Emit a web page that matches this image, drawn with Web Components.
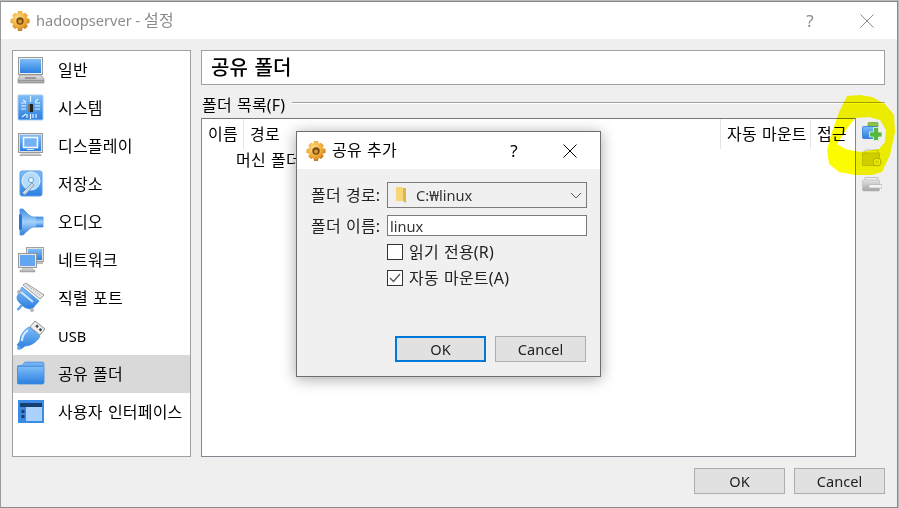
<!DOCTYPE html>
<html lang="ko"><head><meta charset="utf-8">
<style>
html,body{margin:0;height:100%;background:#b9b9b9;overflow:hidden}
body{font:16px/20px "Noto Sans","Noto Sans CJK KR",sans-serif;color:#000;letter-spacing:.2px;word-spacing:.8px}
</style></head><body>
<vb-settings></vb-settings>
<script>
const blue=`<defs>
<linearGradient id="b" x1="0" y1="0" x2="0" y2="1"><stop offset="0" stop-color="#7fbdf8"/><stop offset="1" stop-color="#2a7fe0"/></linearGradient>
<linearGradient id="g" x1="0" y1="0" x2="0" y2="1"><stop offset="0" stop-color="#e4e4e4"/><stop offset="1" stop-color="#a2a2a2"/></linearGradient>
<linearGradient id="h" x1="0" y1="0" x2="0" y2="1"><stop offset="0" stop-color="#3f8ee2"/><stop offset=".5" stop-color="#a4d2fb"/><stop offset="1" stop-color="#2f7fdc"/></linearGradient>
</defs>`;
const ICONS={
general:`<rect x="3.5" y="3.5" width="24" height="17" fill="#eee" stroke="#9a9a9a"/><rect x="5" y="5" width="21" height="14" fill="url(#b)"/><path d="M5 21H26L29 25V29H3V25Z" fill="url(#g)" stroke="#8d8d8d" stroke-width=".7"/><rect x="10" y="23" width="11" height="2" fill="#777" opacity=".6"/><rect x="3" y="26" width="26" height="1" fill="#777" opacity=".5"/>`,
system:`<rect x="3" y="3" width="25" height="25" rx="1" fill="url(#b)" stroke="#a9cbef"/><rect x="13" y="12" width="5" height="8" fill="#222"/><rect x="13" y="12" width="2" height="8" fill="#777"/><path d="M15.5 4v6M15.5 22v5M6 11h5M6 14h5M6 17h5M20 11h5M20 14h5M20 17h5M8 8l3 2M23 7l-3 3M7 25l4-3M12 22v4M18 22v4M21 22v4" stroke="#e8f4ff" stroke-width="1.2" fill="none"/>`,
display:`<rect x="3.5" y="3.5" width="24" height="19" fill="#dedede" stroke="#9a9a9a"/><rect x="5" y="5" width="21" height="16" fill="url(#b)"/><rect x="8.500" y="7.500" width="14" height="10" fill="#74b2f4" stroke="#f2f8ff" stroke-width="1.600"/><rect x="12" y="19" width="7" height="1" fill="#d8ebff"/><path d="M6 23H25L27 26H4Z" fill="url(#g)"/>`,
storage:`<rect x="5" y="3" width="22" height="25" rx="2" fill="url(#b)" stroke="#5c9fe8"/><circle cx="16" cy="13" r="9" fill="#b7dcfb" stroke="#e6f4ff"/><circle cx="16" cy="12" r="2.500" fill="#f1f8ff" stroke="#5f9fe0"/><path d="M7 25L17 15l2 2L10 27Z" fill="#d3d9e0" stroke="#5b8fc8" stroke-width=".8"/>`,
audio:`<path d="M5 3h3c4 4 7 8 11 8h9v10h-9c-4 0-7 5-11 8H5Z" fill="url(#h)" stroke="#4f93e0" stroke-width=".8"/><rect x="4" y="8" width="3" height="16" rx="1.500" fill="#2878d8"/><rect x="21" y="11" width="7" height="10" fill="url(#h)"/>`,
network:`<rect x="11.500" y="3.500" width="17" height="14" fill="#e0e0e0" stroke="#a0a0a0"/><rect x="13" y="5" width="14" height="11" fill="url(#b)"/><rect x="3.500" y="9.500" width="18" height="14" fill="#e6e6e6" stroke="#999"/><rect x="5" y="11" width="15" height="11" fill="#62a6f1"/><path d="M8 24h9l1 2h2v2H5v-2h2Z" fill="url(#g)" stroke="#999" stroke-width=".5"/><path d="M22 18h6v2h-6Z" fill="#bbb"/>`,
serial:`<path d="M11 1L29 13 25 17 8 3Z" fill="#e8e8e8" stroke="#9a9a9a"/><path d="M12 3L26 14" stroke="#999" stroke-width=".8" stroke-dasharray="1.500 1"/><path d="M7 5L24 19 17 27C12 27 9 25 8 24 5 21 2 19 2 15Z" fill="url(#b)" stroke="#3f88da" stroke-width=".8"/><path d="M7 23L2.500 28" stroke="#5aa0ea" stroke-width="2.400"/><circle cx="4" cy="10" r="2" fill="#b5b5b5"/><circle cx="17" cy="28" r="2" fill="#b5b5b5"/><path d="M6 10L18 20" stroke="#cfe6fd" stroke-width="2"/>`,
usb:`<path d="M20 1l10 8-5 6-10-8Z" fill="#ededed" stroke="#8f8f8f"/><rect x="21" y="5" width="2.500" height="2.500" fill="#444" transform="rotate(38 22 6)"/><rect x="24.500" y="8" width="2.500" height="2.500" fill="#444" transform="rotate(38 25 9)"/><path d="M14 7L25 16C22 22 16 26 10 26L6 29 2 25 5 21C5 15 9 10 14 7Z" fill="url(#b)" stroke="#4c90df" stroke-width=".8"/><path d="M13 10C9 13 7 17 7 21" stroke="#d7ecff" stroke-width="2" fill="none"/><circle cx="4" cy="28" r="2" fill="#5ca2ec"/>`,
folder:`<path d="M3 26V7.500h4L10 4H27q2 0 2 2V8H3Z" fill="#6fb1f2" stroke="#4b8fdc" stroke-width=".7"/><path d="M2.500 8.500H29V24.500Q29 26 27.500 26H4Q2.500 26 2.500 24.500Z" fill="url(#b)" stroke="#3f8bdc" stroke-width=".8"/>`,
ui:`<rect x="3" y="4" width="26" height="23" fill="#3b8be6"/><rect x="5" y="7" width="22" height="18" fill="#a9d1fb"/><rect x="5" y="7" width="22" height="4" fill="#14406f"/><rect x="5" y="11" width="6" height="14" fill="#3c86dc"/><rect x="6.500" y="14" width="3" height="3" fill="#123f75"/><rect x="6.500" y="19" width="3" height="3" fill="#123f75"/>`,
add:`<path d="M6 4V1.500Q6 .5 7 .5H15Q16 .5 16 1.500V5Z" fill="#8cc63f" stroke="#5f9e2b" stroke-width=".6"/><rect x=".5" y="4.500" width="15" height="12" rx="1" fill="url(#b)" stroke="#2d7ad0" stroke-width=".8"/><path d="M11.500 5.500h5v4.500h3.500v5h-3.500v3.500h-5V15H7.500V10h4Z" fill="#56b83f" stroke="#e7f7da" stroke-width=".8"/>`,
edit:`<path d="M3 4V1h13v3" fill="#f0f0f0" stroke="#c4c4c4"/><rect x=".5" y="4" width="17" height="12.500" fill="#d2d2d2" stroke="#b4b4b4" stroke-width=".7"/><circle cx="15" cy="13" r="4" fill="#efefef" stroke="#b0b0b0"/><circle cx="15" cy="13" r="1.800" fill="#d4d4d4"/>`,
remove:`<path d="M3 4V1.500h13V4" fill="#eee" stroke="#c2c2c2"/><rect x=".5" y="4" width="17" height="11" rx="1" fill="url(#g)" stroke="#bbb" stroke-width=".7"/><rect x="7" y="8.500" width="13" height="3.500" fill="#f4f4f4" stroke="#b5b5b5" stroke-width=".7"/>`
};
function def(name,css,html,extra={}){
  const t=document.createElement('template');
  t.innerHTML=`<style>${css}</style>${html}`;
  customElements.define(name,class extends HTMLElement{
    constructor(){super();this.attachShadow({mode:'open'}).appendChild(t.content.cloneNode(true));}
    connectedCallback(){extra.init&&extra.init.call(this)}
  });
}
def('vb-latin',`:host{display:inline;font-size:14.6px;white-space:pre;letter-spacing:0;word-spacing:0}`,`<slot></slot>`);
def('vb-icon',`:host{display:block;width:var(--s,32px);height:var(--s,32px);flex:none}svg{display:block;width:100%;height:100%}`,`<svg></svg>`,{
  init(){const n=this.getAttribute('name');const vb=this.getAttribute('vb')||'0 0 32 32';const s=this.shadowRoot.querySelector('svg');s.setAttribute('viewBox',vb);s.innerHTML=blue+ICONS[n];}
});
def('vb-gear',`:host{display:block;width:20px;height:20px;flex:none}svg{display:block}`,`<svg width="20" height="20" viewBox="0 0 20 20"><defs><radialGradient id="a" cx=".4" cy=".35" r=".75"><stop offset="0" stop-color="#ffe089"/><stop offset=".6" stop-color="#eda52f"/><stop offset="1" stop-color="#a9671a"/></radialGradient></defs><path d="M8 0h4l.7 2.800 2.300-1 2.800 2.800-1.300 2.300L19.500 8v4l-3 .7 1.300 2.500-2.800 2.800-2.300-1.300L12 20H8l-.7-3.300-2.300 1.300L2.200 15.200l1.300-2.500L.5 12V8l3-.9L2.200 4.600 5 1.800l2.300 1Z" fill="url(#a)"/><circle cx="10" cy="10" r="3.700" fill="#7a4a12"/><circle cx="10" cy="10.500" r="2" fill="#d89a36"/></svg>`);
def('vb-close',`:host{display:block;width:14px;height:14px;color:inherit}svg{display:block}`,`<svg width="14" height="14" viewBox="0 0 14 14"><path d="M.5.5l13 13M13.500.5l-13 13" stroke="currentColor" stroke-width="1" fill="none"/></svg>`);
def('vb-titlebar',`:host{display:flex;align-items:center;height:var(--h,37px);background:#fff;flex:none;padding-left:9px;gap:6px;color:var(--c,#000)}
.t{flex:1;white-space:nowrap;margin-top:-2px}.q{font-size:17px;width:20px;text-align:center;margin-right:var(--qm,34px)}vb-close{margin-right:var(--xm,23px)}`,
`<vb-gear></vb-gear><span class="t"><slot></slot></span><span class="q">?</span><vb-close></vb-close>`);
def('vb-button',`:host{display:flex;align-items:center;justify-content:center;box-sizing:border-box;width:91px;height:26px;background:#e1e1e1;border:1px solid #adadad;font-size:14.6px;letter-spacing:0;color:#222;flex:none}
:host([default]){border:2px solid #0078d7}`,`<slot></slot>`);
def('vb-nav-item',`:host{display:flex;align-items:center;height:38px;padding-left:2px;gap:11px;white-space:nowrap;color:#000}:host([selected]){background:#d9d9d9}`,`<slot name="icon"></slot><span><slot></slot></span>`);
def('vb-sidebar',`:host{display:block;box-sizing:border-box;background:#fff;border:1px solid #a0a0a0;width:179px;flex:none}`,`<slot></slot>`);
def('vb-header-cell',`:host{display:flex;align-items:center;box-sizing:border-box;padding-left:6px;border-right:1px solid #e5e5e5;height:30px;white-space:nowrap}`,`<slot></slot>`);
def('vb-table',`:host{display:block;box-sizing:border-box;flex:1;background:#fff;border:1px solid #828790;border-top-color:#777}
.h{display:grid;grid-template-columns:42px 477px 90px 44px;height:31px}.r{box-sizing:border-box;padding:0 0 0 34px;height:20px;white-space:nowrap}`,
`<div class="h"><vb-header-cell>이름</vb-header-cell><vb-header-cell>경로</vb-header-cell><vb-header-cell>자동 마운트</vb-header-cell><vb-header-cell style="border:0">접근</vb-header-cell></div><div class="r">머신 폴더</div>`);
def('vb-group-label',`:host{display:flex;height:33px;gap:7px;white-space:nowrap;padding-left:1px}
i{flex:1;height:1px;background:#a0a0a0;box-shadow:0 1px #fff;margin-top:17px}span{height:20px;margin-top:10px}`,`<span><slot></slot></span><i></i>`);
def('vb-highlight',`:host{position:absolute;left:824px;top:93px;width:74px;height:84px;pointer-events:none;mix-blend-mode:multiply}svg{display:block}`,
`<svg width="74" height="84" viewBox="825 95 74 84"><path fill-rule="evenodd" fill="#fcfc00" d="M847 96L860 95 872 97 885 104 894 115 895 132 890 155 882 172 872 175 855 175 839 172 829 164 827 150 832 132 839 112ZM855 118L869 117 880 120 886 130 885 142 879 149 860 152 855 151 845 149 837 144 846 130Z"/></svg>`);
def('vb-checkbox',`:host{display:flex;align-items:center;gap:6px;height:16px;white-space:nowrap;color:#222}
.b{box-sizing:border-box;width:16px;height:16px;background:#fff;border:1px solid #333;flex:none}svg{display:block}`,
`<span class="b"><svg width="14" height="14" viewBox="0 0 14 14"><path class="m" d="M2 7l3.500 3.500L12 3" stroke="#555" stroke-width="1.300" fill="none"/></svg></span><slot></slot>`,{init(){if(!this.hasAttribute('checked'))this.shadowRoot.querySelector('.m').remove();}});
def('vb-combo',`:host{display:flex;align-items:center;box-sizing:border-box;height:26px;background:#f0f0f0;border:1px solid #7a7a7a;padding-left:7px;gap:8px;color:#333;font-size:14.6px;letter-spacing:0}
.t{flex:1}svg{display:block;flex:none}`,
`<svg width="13" height="18" viewBox="0 0 13 18"><path d="M1 1h6l1 1h3v15l-3-2H1Z" fill="#f5d779"/><path d="M8 2h3v15l-3-2Z" fill="#dcb74f"/></svg><span class="t"><slot></slot></span><svg width="12" height="7" viewBox="0 0 12 7" style="margin-right:4px"><path d="M1 1l5 5 5-5" stroke="#555" fill="none"/></svg>`);
def('vb-input',`:host{display:flex;align-items:center;box-sizing:border-box;height:21px;background:#fff;border:1px solid #7a7a7a;padding-left:2px;color:#333;font-size:14.6px;letter-spacing:0}`,`<slot></slot>`);
def('vb-dialog',`:host{position:absolute;left:295px;top:129px;width:305px;height:246px;box-sizing:border-box;border:1px solid #6f6f6f;background:#f0f0f0;display:flex;flex-direction:column;box-shadow:0 2px 14px rgba(0,0,0,.35);z-index:5;--qm:33px;color:#222}
.f{display:grid;grid-template-columns:76px 200px;padding:13px 0 0 14px;align-items:center;row-gap:7px}
.l{white-space:nowrap}.c{grid-column:2;margin-top:1px}.c+.c{margin-top:3px}
.b{display:flex;justify-content:flex-end;gap:9px;padding:0 14px 0 0;margin-top:auto;margin-bottom:14px}`,
`<vb-titlebar><slot name="title"></slot></vb-titlebar><div class="f"><span class="l">폴더 경로:</span><vb-combo>C:₩linux</vb-combo><span class="l">폴더 이름:</span><vb-input>linux</vb-input><vb-checkbox class="c">읽기 전용(R)</vb-checkbox><vb-checkbox class="c" checked>자동 마운트(A)</vb-checkbox></div><div class="b"><vb-button default>OK</vb-button><vb-button>Cancel</vb-button></div>`);
def('vb-settings',`:host{display:flex;flex-direction:column;position:relative;box-sizing:border-box;width:898px;height:507px;margin-top:1px;border:1px solid #8a8a8a;border-left-color:#9a9a9a;background:#efefef;--c:#000}
vb-titlebar{--c:#8c8c8c}
.m{display:flex;gap:10px;padding:11px 12px 0 11px;height:407px;box-sizing:content-box}
.r{flex:1;display:flex;flex-direction:column;min-width:0}
.head{box-sizing:border-box;height:35px;background:#fff;border:1px solid #a0a0a0;padding-left:9px;font-size:20px;line-height:34px;font-weight:500;flex:none}
.mid{flex:1;display:flex;min-height:0}.tb{width:29px;flex:none;display:flex;flex-direction:column;padding:4px 0 0 6px;gap:7px;box-sizing:border-box;--s:20px}
.f{display:flex;justify-content:flex-end;gap:9px;padding:11px 12px 0}`,
`<vb-titlebar><vb-latin>hadoopserver - </vb-latin>설정</vb-titlebar>
<div class="m"><vb-sidebar>
<vb-nav-item><vb-icon slot="icon" name="general"></vb-icon>일반</vb-nav-item>
<vb-nav-item><vb-icon slot="icon" name="system"></vb-icon>시스템</vb-nav-item>
<vb-nav-item><vb-icon slot="icon" name="display"></vb-icon>디스플레이</vb-nav-item>
<vb-nav-item><vb-icon slot="icon" name="storage"></vb-icon>저장소</vb-nav-item>
<vb-nav-item><vb-icon slot="icon" name="audio"></vb-icon>오디오</vb-nav-item>
<vb-nav-item><vb-icon slot="icon" name="network"></vb-icon>네트워크</vb-nav-item>
<vb-nav-item><vb-icon slot="icon" name="serial"></vb-icon>직렬 포트</vb-nav-item>
<vb-nav-item><vb-icon slot="icon" name="usb"></vb-icon><vb-latin>USB</vb-latin></vb-nav-item>
<vb-nav-item selected><vb-icon slot="icon" name="folder"></vb-icon>공유 폴더</vb-nav-item>
<vb-nav-item><vb-icon slot="icon" name="ui"></vb-icon>사용자 인터페이스</vb-nav-item>
</vb-sidebar>
<div class="r"><div class="head">공유 폴더</div><vb-group-label>폴더 목록(F)</vb-group-label>
<div class="mid"><vb-table></vb-table><div class="tb"><vb-icon name="add" vb="0 0 20 20"></vb-icon><vb-icon name="edit" vb="0 0 20 20"></vb-icon><vb-icon name="remove" vb="0 0 20 20"></vb-icon></div></div></div></div>
<div class="f"><vb-button>OK</vb-button><vb-button>Cancel</vb-button></div>
<vb-highlight></vb-highlight>
<vb-dialog><span slot="title">공유 추가</span></vb-dialog>`);
</script>
</body></html>
